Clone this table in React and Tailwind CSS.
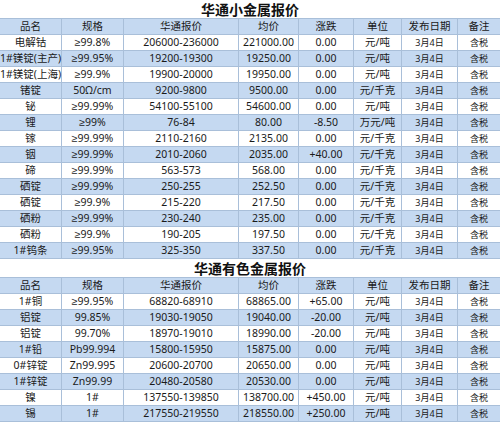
import React from 'react';

const cols = ['w-[62px]', 'w-[62px]', 'w-[115px]', 'w-[60px]', 'w-[55px]', 'w-[48px]', 'w-[56px]', 'w-[42px]'];

const header = ['品名', '规格', '华通报价', '均价', '涨跌', '单位', '发布日期', '备注'];

const minor = [
    ['电解钴', '≥99.8%', '206000-236000', '221000.00', '0.00', '元/吨'],
    ['1#镁锭(主产)', '≥99.95%', '19200-19300', '19250.00', '0.00', '元/吨'],
    ['1#镁锭(上海)', '≥99.9%', '19900-20000', '19950.00', '0.00', '元/吨'],
    ['锗锭', '50Ω/cm', '9200-9800', '9500.00', '0.00', '元/千克'],
    ['铋', '≥99.99%', '54100-55100', '54600.00', '0.00', '元/吨'],
    ['锂', '≥99%', '76-84', '80.00', '-8.50', '万元/吨'],
    ['镓', '≥99.99%', '2110-2160', '2135.00', '0.00', '元/千克'],
    ['铟', '≥99.99%', '2010-2060', '2035.00', '+40.00', '元/千克'],
    ['碲', '≥99.99%', '563-573', '568.00', '0.00', '元/千克'],
    ['硒锭', '≥99.99%', '250-255', '252.50', '0.00', '元/千克'],
    ['硒锭', '≥99.9%', '215-220', '217.50', '0.00', '元/千克'],
    ['硒粉', '≥99.99%', '230-240', '235.00', '0.00', '元/千克'],
    ['硒粉', '≥99.9%', '190-205', '197.50', '0.00', '元/千克'],
    ['1#钨条', '≥99.95%', '325-350', '337.50', '0.00', '元/千克'],
];

const nonferrous = [
    ['1#铜', '≥99.95%', '68820-68910', '68865.00', '+65.00', '元/吨'],
    ['铝锭', '99.85%', '19030-19050', '19040.00', '-20.00', '元/吨'],
    ['铝锭', '99.70%', '18970-19010', '18990.00', '-20.00', '元/吨'],
    ['1#铅', 'Pb99.994', '15800-15950', '15875.00', '0.00', '元/吨'],
    ['0#锌锭', 'Zn99.995', '20600-20700', '20650.00', '0.00', '元/吨'],
    ['1#锌锭', 'Zn99.99', '20480-20580', '20530.00', '0.00', '元/吨'],
    ['镍', '1#', '137550-139850', '138700.00', '+450.00', '元/吨'],
    ['锡', '1#', '217550-219550', '218550.00', '+250.00', '元/吨'],
];

const Row = ({ cells, blue, small }) => (
    <div className={`flex h-[16px] border-b border-[#a9bfd9] ${blue ? 'bg-[#c5d9f1]' : 'bg-white'}`}>
        {cells.map((c, i) => (
            <div
                key={i}
                className={`${cols[i]} shrink-0 flex items-center justify-center whitespace-nowrap leading-none border-r border-[#a9bfd9] last:border-r-0 ${i >= 6 && small ? 'text-[9px]' : 'text-[10.5px]'}`}
            >
                {c}
            </div>
        ))}
    </div>
);

const Section = ({ title, rows, titleH }) => (
    <div>
        <div className={`${titleH} flex items-center justify-center bg-white border-b border-[#a9bfd9] text-[14px] font-bold text-[#111]`}>
            {title}
        </div>
        <Row cells={header} blue />
        {rows.map((r, i) => (
            <Row key={i} cells={[...r, '3月4日', '含税']} blue={i % 2 === 1} small />
        ))}
    </div>
);

export default function App() {
    return (
        <div className="w-[500px] h-[423px] overflow-hidden bg-white text-[#1a1a1a] font-['Noto_Sans','Liberation_Sans','Noto_Sans_CJK_SC',sans-serif]">
            <Section title="华通小金属报价" rows={minor} titleH="h-[19px]" />
            <Section title="华通有色金属报价" rows={nonferrous} titleH="h-[19px]" />
        </div>
    );
}
